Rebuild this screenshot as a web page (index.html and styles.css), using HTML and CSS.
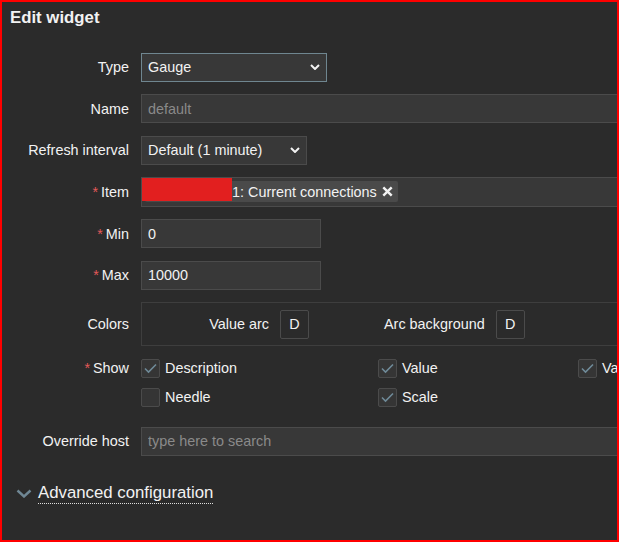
FILE: index.html
```html
<!DOCTYPE html>
<html>
<head>
<meta charset="utf-8">
<title>Edit widget</title>
<link rel="stylesheet" href="styles.css">
</head>
<body>
<div class="frame">
  <h1 class="title">Edit widget</h1>
  <div class="form">
    <div class="lbl">Type</div>
    <div class="ctl">
      <div class="select sel-type focused"><span>Gauge</span>
        <svg class="caret" width="10" height="6" viewBox="0 0 10 6"><polyline points="1,1 5,5 9,1" fill="none" stroke="#f2f2f2" stroke-width="2"/></svg>
      </div>
    </div>

    <div class="lbl">Name</div>
    <div class="ctl"><input class="inp wide" placeholder="default" readonly></div>

    <div class="lbl">Refresh interval</div>
    <div class="ctl">
      <div class="select sel-refresh"><span>Default (1 minute)</span>
        <svg class="caret" width="10" height="6" viewBox="0 0 10 6"><polyline points="1,1 5,5 9,1" fill="none" stroke="#f2f2f2" stroke-width="2"/></svg>
      </div>
    </div>

    <div class="lbl req">Item</div>
    <div class="ctl">
      <div class="multi wide">
        <span class="chip"><span class="host-gap"></span>1: Current connections<svg class="chip-x" width="11" height="11" viewBox="0 0 11 11"><path d="M1.3 1.3 L9.7 9.7 M9.7 1.3 L1.3 9.7" stroke="#f2f2f2" stroke-width="2.4" fill="none"/></svg></span>
        <span class="redact"></span>
      </div>
    </div>

    <div class="lbl req">Min</div>
    <div class="ctl"><input class="inp num" value="0" readonly></div>

    <div class="lbl req">Max</div>
    <div class="ctl"><input class="inp num" value="10000" readonly></div>

    <div class="lbl">Colors</div>
    <div class="ctl">
      <div class="colors wide">
        <span class="clbl">Value arc</span>
        <span class="dbtn">D</span>
        <span class="clbl">Arc background</span>
        <span class="dbtn">D</span>
      </div>
    </div>

    <div class="lbl req lbl-show">Show</div>
    <div class="ctl show">
      <div class="checks">
        <div class="chk"><span class="box on"><svg width="17" height="17" viewBox="0 0 17 17"><polyline points="3,8.5 6.5,12 14,4.5" fill="none" stroke="#6f8a98" stroke-width="1.6"/></svg></span>Description</div>
        <div class="chk"><span class="box on"><svg width="17" height="17" viewBox="0 0 17 17"><polyline points="3,8.5 6.5,12 14,4.5" fill="none" stroke="#6f8a98" stroke-width="1.6"/></svg></span>Value</div>
        <div class="chk"><span class="box on"><svg width="17" height="17" viewBox="0 0 17 17"><polyline points="3,8.5 6.5,12 14,4.5" fill="none" stroke="#6f8a98" stroke-width="1.6"/></svg></span>Value arc</div>
        <div class="chk"><span class="box"></span>Needle</div>
        <div class="chk"><span class="box on"><svg width="17" height="17" viewBox="0 0 17 17"><polyline points="3,8.5 6.5,12 14,4.5" fill="none" stroke="#6f8a98" stroke-width="1.6"/></svg></span>Scale</div>
      </div>
    </div>

    <div class="lbl">Override host</div>
    <div class="ctl"><input class="inp wide" placeholder="type here to search" readonly></div>
  </div>

  <div class="advanced">
    <svg class="adv-chev" width="16" height="9" viewBox="0 0 16 9"><polyline points="1.5,1.5 8,7.5 14.5,1.5" fill="none" stroke="#6f8794" stroke-width="2.4"/></svg>
    <span class="adv-text">Advanced configuration</span>
  </div>
</div>
</body>
</html>
```

FILE: styles.css
```css
* { box-sizing: border-box; }

html, body {
  margin: 0;
  padding: 0;
  background: #2b2b2b;
}

body {
  font-family: "Liberation Sans", Arial, sans-serif;
  font-size: 14.4px;
  color: #f2f2f2;
}

.frame {
  width: 619px;
  height: 542px;
  border: 2px solid #ff0000;
  background: #2b2b2b;
  overflow: hidden;
}

.title {
  margin: 0;
  padding: 5.5px 0 0 8px;
  font-size: 16.8px;
  font-weight: bold;
  line-height: 19.3px;
}

.form {
  display: grid;
  grid-template-columns: 127px 1fr;
  column-gap: 12px;
  row-gap: 12.6px;
  margin-top: 26.2px;
}

.lbl {
  text-align: right;
  align-self: center;
  white-space: nowrap;
}

.req::before {
  content: "*";
  color: #e45959;
  margin-right: 3px;
}

.lbl-show {
  align-self: start;
  padding-top: 0.5px;
  line-height: 19px;
}

.ctl {
  min-width: 0;
}

.select {
  display: flex;
  align-items: center;
  justify-content: space-between;
  height: 28.8px;
  padding: 0 6.5px 0 6px;
  background: #383838;
  border: 1px solid #4b4b4b;
  white-space: nowrap;
}

.select.focused { border-color: #6f8690; }
.sel-type { width: 186px; }
.sel-refresh { width: 166px; }

.caret { flex: none; }

.inp {
  display: block;
  height: 28.8px;
  margin: 0;
  padding: 0 6px;
  background: #383838;
  border: 1px solid #4b4b4b;
  border-radius: 0;
  color: #f2f2f2;
  font: inherit;
  outline: none;
}

.inp::placeholder { color: #8a8a8a; opacity: 1; }

.wide { width: 520px; }
.num { width: 180px; }

.multi {
  position: relative;
  display: flex;
  align-items: flex-start;
  height: 29.6px;
  padding: 3px;
  background: #383838;
  border: 1px solid #4b4b4b;
}

.chip {
  display: inline-flex;
  align-items: center;
  height: 21px;
  padding: 0 5px 0 4px;
  background: #4a4a4a;
  border-radius: 2px;
  white-space: nowrap;
}

.host-gap {
  display: inline-block;
  width: 83px;
}

.chip-x {
  margin-left: 5px;
}

.redact {
  position: absolute;
  left: -0.5px;
  top: -0.5px;
  width: 90px;
  height: 23px;
  background: #e21f1f;
}

.colors {
  display: grid;
  grid-template-columns: 127px 28.8px 165px 28.8px;
  column-gap: 11px;
  align-items: center;
  height: 44px;
  border: 1px solid #3e3e3e;
}

.clbl {
  text-align: right;
  white-space: nowrap;
}

.dbtn {
  display: flex;
  align-items: center;
  justify-content: center;
  height: 28.8px;
  border: 1px solid #4b4b4b;
  border-radius: 2px;
  background: #2b2b2b;
}

.show {
  padding: 0.5px 0 7px;
}

.checks {
  display: grid;
  grid-template-columns: 237px 200px max-content;
  row-gap: 10px;
}

.chk {
  display: flex;
  align-items: center;
  gap: 5px;
  height: 19px;
  line-height: 19px;
  white-space: nowrap;
}

.box {
  flex: none;
  width: 19px;
  height: 19px;
  border: 1px solid #4b4b4b;
  border-radius: 2px;
  background: #353535;
}

.box svg { display: block; }

.advanced {
  display: flex;
  align-items: center;
  gap: 6px;
  margin-top: 27.7px;
  padding-left: 14px;
}

.adv-chev { flex: none; }

.adv-text {
  display: inline-block;
  font-size: 16.8px;
  line-height: 19.3px;
  border-bottom: 1px dotted #e0e0e0;
}
```
